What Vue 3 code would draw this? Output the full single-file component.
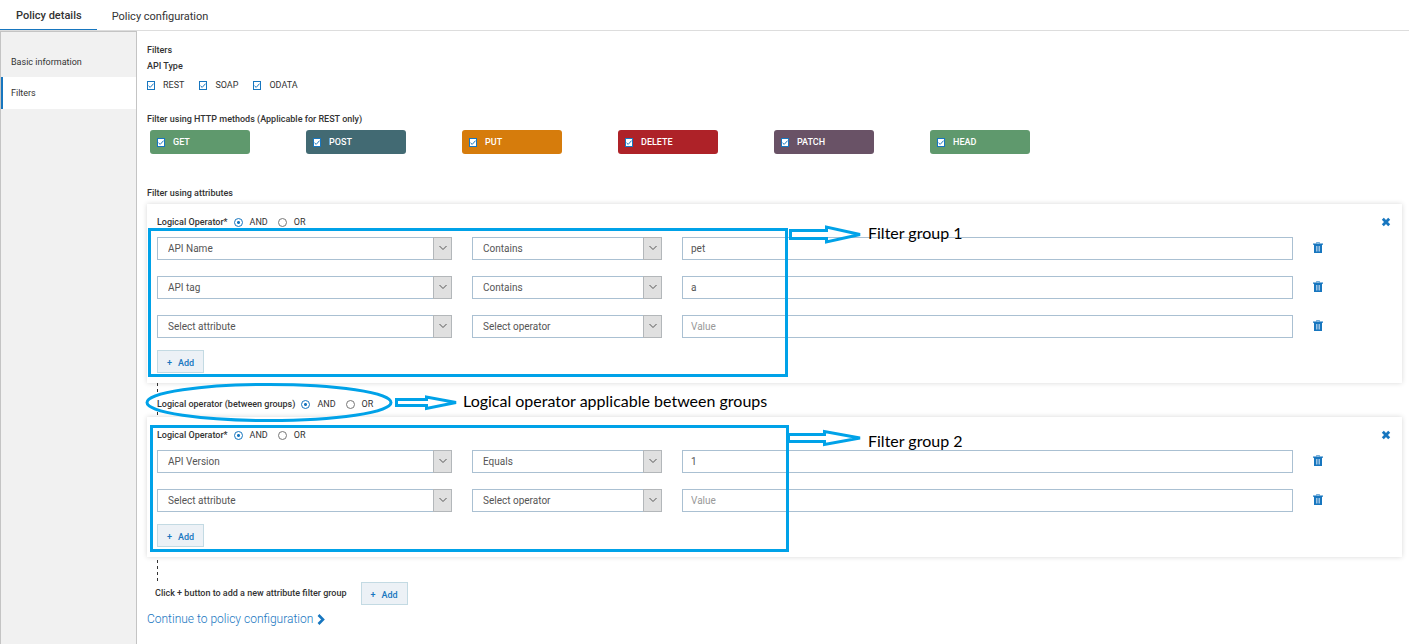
<script setup>
import { reactive, ref } from 'vue'

const apiTypes = reactive([
  { name: 'REST', on: true },
  { name: 'SOAP', on: true },
  { name: 'ODATA', on: true },
])

const methods = reactive([
  { name: 'GET', on: true },
  { name: 'POST', on: true },
  { name: 'PUT', on: true },
  { name: 'DELETE', on: true },
  { name: 'PATCH', on: true },
  { name: 'HEAD', on: true },
])

const attributes = ['Select attribute', 'API Name', 'API tag', 'API Version']
const operators = ['Select operator', 'Contains', 'Equals']

const groups = reactive([
  {
    id: 1,
    logic: 'AND',
    rows: [
      { attribute: 'API Name', operator: 'Contains', value: 'pet' },
      { attribute: 'API tag', operator: 'Contains', value: 'a' },
      { attribute: 'Select attribute', operator: 'Select operator', value: '' },
    ],
  },
  {
    id: 2,
    logic: 'AND',
    rows: [
      { attribute: 'API Version', operator: 'Equals', value: '1' },
      { attribute: 'Select attribute', operator: 'Select operator', value: '' },
    ],
  },
])

const between = ref('AND')
let nextId = 3

function emptyRow() {
  return { attribute: 'Select attribute', operator: 'Select operator', value: '' }
}
function addRow(group) {
  group.rows.push(emptyRow())
}
function addGroup() {
  groups.push({ id: nextId++, logic: 'AND', rows: [emptyRow()] })
}
</script>

<template>
  <div class="page">
    <nav class="tabs">
      <a href="#details" class="tab active">Policy details</a>
      <a href="#configuration" class="tab">Policy configuration</a>
    </nav>

    <div class="body">
      <aside class="side">
        <a href="#basic" class="side-item">Basic information</a>
        <a href="#filters" class="side-item current">Filters</a>
      </aside>

      <main class="main">
        <h1 class="title">Filters</h1>
        <h2 class="title">API Type</h2>
        <div class="types">
          <label v-for="t in apiTypes" :key="t.name" class="check">
            <span class="tick">
              <input v-model="t.on" type="checkbox" />
              <svg viewBox="0 0 8 9"><path d="M1.5 4.8 3.2 6.4 6.6 2.6" /></svg>
            </span>
            {{ t.name }}
          </label>
        </div>

        <h2 class="title methods-title">Filter using HTTP methods (Applicable for REST only)</h2>
        <div class="methods">
          <label v-for="m in methods" :key="m.name" class="check method" :class="m.name.toLowerCase()">
            <span class="tick">
              <input v-model="m.on" type="checkbox" />
              <svg viewBox="0 0 8 9"><path d="M1.5 4.8 3.2 6.4 6.6 2.6" /></svg>
            </span>
            {{ m.name }}
          </label>
        </div>

        <h2 class="title attr-title">Filter using attributes</h2>

        <template v-for="(g, gi) in groups" :key="g.id">
          <div v-if="gi > 0" class="between">
            <span class="dash"></span>
            <div class="logic">
              <span class="strong">Logical operator (between groups)</span>
              <label><input v-model="between" type="radio" name="between" value="AND" />AND</label>
              <label><input v-model="between" type="radio" name="between" value="OR" />OR</label>
            </div>
            <span class="dash short"></span>
          </div>

          <section class="group">
            <div class="group-head">
              <div class="logic">
                <span class="strong">Logical Operator*</span>
                <label><input v-model="g.logic" type="radio" :name="'logic' + g.id" value="AND" />AND</label>
                <label><input v-model="g.logic" type="radio" :name="'logic' + g.id" value="OR" />OR</label>
              </div>
              <button class="icon" type="button" aria-label="Remove group" @click="groups.splice(gi, 1)">
                <svg width="10" height="10" viewBox="0 0 10 10">
                  <path d="M1.8 1.8 8.2 8.2M8.2 1.8 1.8 8.2" stroke="currentColor" stroke-width="2.8" />
                </svg>
              </button>
            </div>

            <div class="rows">
              <div v-for="(r, ri) in g.rows" :key="ri" class="row">
                <div class="select">
                  <select v-model="r.attribute" aria-label="Attribute">
                    <option v-for="a in attributes" :key="a">{{ a }}</option>
                  </select>
                  <span class="arrow"><svg viewBox="0 0 10 6"><path d="M1.5 1 5 4.5 8.5 1" /></svg></span>
                </div>
                <div class="select">
                  <select v-model="r.operator" aria-label="Operator">
                    <option v-for="o in operators" :key="o">{{ o }}</option>
                  </select>
                  <span class="arrow"><svg viewBox="0 0 10 6"><path d="M1.5 1 5 4.5 8.5 1" /></svg></span>
                </div>
                <input v-model="r.value" class="value" type="text" placeholder="Value" aria-label="Value" />
                <button class="icon trash" type="button" aria-label="Delete row" @click="g.rows.splice(ri, 1)">
                  <svg width="10" height="11" viewBox="0 0 10 11">
                    <path d="M3.5 1.5V.5h3v1" fill="none" stroke="currentColor" stroke-opacity=".6" />
                    <path d="M0 1.5h10v1.2H9V11H1V2.700H0z" fill="currentColor" />
                    <path d="M3.500 4v5.500M5 4v5.500M6.500 4v5.500" stroke="#d6e6f4" stroke-width=".7" />
                  </svg>
                </button>
              </div>
            </div>
            <button class="add" type="button" @click="addRow(g)"><span>+</span>Add</button>
          </section>
        </template>

        <div class="tail"></div>
        <div class="new-group">
          <span class="strong">Click + button to add a new attribute filter group</span>
          <button class="add" type="button" @click="addGroup"><span>+</span>Add</button>
        </div>

        <a href="#configuration" class="next">
          Continue to policy configuration
          <svg width="8" height="11" viewBox="0 0 8 11"><path d="M1.5 1 6 5.5 1.5 10" /></svg>
        </a>
      </main>
    </div>

    <div class="notes">
      <svg width="900" height="600" viewBox="0 0 900 600">
        <rect x="149.5" y="229.5" width="637" height="146" />
        <rect x="151.5" y="426.5" width="636" height="124" />
        <ellipse cx="269" cy="402.5" rx="122" ry="18" />
        <path d="M790.5 230.5H826.5V227L860 234.5 826.5 242V238.5H790.5Z" />
        <path d="M396.5 399.5H426.5V397L456 402.5 426.5 408.5V405.5H396.5Z" />
        <path d="M788.5 434.5H824.5V431.5L860 438 824.5 444.500V441.5H788.5Z" />
      </svg>
      <span class="note first">Filter group 1</span>
      <span class="note middle">Logical operator applicable between groups</span>
      <span class="note second">Filter group 2</span>
    </div>
  </div>
</template>

<style>
body {
  background: #fff;
}
</style>

<style scoped>
* {
  box-sizing: border-box;
}
.page {
  position: relative;
  display: flex;
  flex-direction: column;
  min-height: 100vh;
  font-family: Roboto, 'Liberation Sans', sans-serif;
  font-size: 9px;
  line-height: 16px;
  color: #333;
}
a {
  color: inherit;
  text-decoration: none;
}
.tabs {
  display: flex;
  height: 31px;
  border-bottom: 1px solid #ddd;
  font-size: 11px;
}
.tab {
  padding: 9px 15px 0;
  height: 30px;
}
.tab.active {
  padding: 8px 15px 0 16px;
  font-weight: 500;
  border-bottom: 1px solid #1776bf;
}
.body {
  display: flex;
  flex: 1;
}
.side {
  width: 137px;
  padding-top: 14px;
  background: #f1f1f1;
  border: 1px solid #c4c4c4;
  border-bottom: 0;
}
.side-item {
  display: block;
  padding: 8px 10px 7px;
}
.side-item.current {
  padding: 8px;
  background: #fff;
  border-left: 2px solid #1776bf;
}
.main {
  flex: 1;
  min-width: 0;
  padding: 11px 7px 0 10px;
}
.title {
  margin: 0;
  font-size: 9px;
  font-weight: 500;
}
.types {
  display: flex;
  gap: 15px;
  margin-top: 3px;
}
.check {
  display: flex;
  align-items: center;
  gap: 8px;
}
.tick {
  position: relative;
  width: 8px;
  height: 9px;
}
.tick input {
  appearance: none;
  display: block;
  width: 8px;
  height: 9px;
  margin: 0;
  background: #fff;
  border: 1px solid #1776bf;
}
.tick svg {
  position: absolute;
  inset: 0;
  width: 8px;
  height: 9px;
  fill: none;
  stroke: #1776bf;
  pointer-events: none;
}
.tick input:not(:checked) + svg {
  display: none;
}
.methods-title {
  margin-top: 18px;
}
.methods {
  display: flex;
  gap: 56px;
  margin: 3px 0 0 3px;
}
.method {
  width: 100px;
  height: 24px;
  padding-left: 7px;
  border-radius: 3px;
  color: #fff;
  font-weight: 500;
}
.get,
.head {
  background: #5f996d;
}
.post {
  background: #426a73;
}
.put {
  background: #d67c0c;
}
.delete {
  background: #ae2228;
}
.patch {
  background: #695266;
}
.attr-title {
  margin: 31px 0 3px;
}
.group {
  padding: 10px;
  background: #fff;
  box-shadow: 0 0 5px rgba(0, 0, 0, 0.16);
}
.group-head {
  display: flex;
  justify-content: space-between;
  align-items: center;
  height: 16px;
  padding-right: 1px;
  margin-bottom: 7px;
}
.logic {
  display: flex;
  align-items: center;
  gap: 10px;
}
.strong {
  font-weight: 500;
}
.logic label {
  display: flex;
  align-items: center;
  gap: 7px;
}
.logic .strong + label {
  margin-left: -4px;
}
.logic input {
  appearance: none;
  width: 9px;
  height: 9px;
  margin: 0;
  border: 1px solid #777;
  border-radius: 50%;
  background: #fff;
}
.logic input:checked {
  border-color: #1776bf;
  background: radial-gradient(circle, #1776bf 1px, #fff 2px);
}
.icon {
  display: flex;
  padding: 0;
  border: 0;
  background: none;
  color: #1776bf;
}
.trash {
  padding-bottom: 2px;
}
.rows {
  display: grid;
  gap: 16px;
  margin-right: 69px;
}
.row {
  display: grid;
  grid-template-columns: 295px 190px 1fr 10px;
  gap: 20px;
  align-items: center;
}
.select {
  position: relative;
}
.select select,
.value {
  display: block;
  width: 100%;
  height: 23px;
  margin: 0;
  padding: 0 8px;
  border: 1px solid #aac0d2;
  border-radius: 0;
  background: #fff;
  color: #555;
  font: inherit;
  font-size: 10px;
  outline: 0;
}
.select select {
  appearance: none;
  padding: 1px 24px 0 10px;
}
.value::placeholder {
  color: #999;
}
.arrow {
  position: absolute;
  top: 0;
  right: 0;
  bottom: 0;
  display: flex;
  align-items: center;
  justify-content: center;
  width: 19px;
  padding-bottom: 2px;
  background: #e0e0e0;
  border: 1px solid #b3b7ba;
  pointer-events: none;
}
.arrow svg {
  width: 10px;
  height: 6px;
  fill: none;
  stroke: #555;
}
.add {
  display: flex;
  align-items: center;
  justify-content: center;
  gap: 6px;
  width: 47px;
  height: 23px;
  padding: 2px 0 0;
  border: 1px solid #c3dae3;
  background: #ecf1f6;
  color: #1776bf;
  font: inherit;
  font-weight: 500;
}
.group .add {
  margin-top: 12px;
}
.between {
  display: flex;
  flex-direction: column;
  height: 34px;
  padding-left: 10px;
}
.dash {
  flex: 1;
  width: 1px;
  background: repeating-linear-gradient(#333 0 3px, transparent 3px 6px);
}
.dash.short {
  flex: 0 0 5px;
}
.tail {
  width: 1px;
  height: 22px;
  margin: 3px 0 0 10px;
  background: repeating-linear-gradient(#333 0 3px, transparent 3px 6px);
}
.new-group {
  display: flex;
  align-items: center;
  gap: 14px;
  padding-left: 8px;
}
.new-group .strong {
  margin-top: -2px;
}
.next {
  display: inline-flex;
  align-items: center;
  gap: 4px;
  margin-top: 6px;
  color: #1776bf;
  font-size: 12px;
  font-weight: 300;
}
.next svg {
  fill: none;
  stroke: #1776bf;
  stroke-width: 2.6;
}
.notes {
  position: absolute;
  top: 0;
  left: 0;
  pointer-events: none;
}
.notes svg {
  display: block;
  fill: none;
  stroke: #00a2e8;
  stroke-width: 3;
}
.note {
  position: absolute;
  color: #000;
  font-family: Lato, 'Open Sans', sans-serif;
  font-size: 16px;
  line-height: 20px;
  white-space: nowrap;
}
.note.first {
  top: 223px;
  left: 868px;
}
.note.middle {
  top: 391px;
  left: 463px;
}
.note.second {
  top: 431px;
  left: 868px;
}
</style>
